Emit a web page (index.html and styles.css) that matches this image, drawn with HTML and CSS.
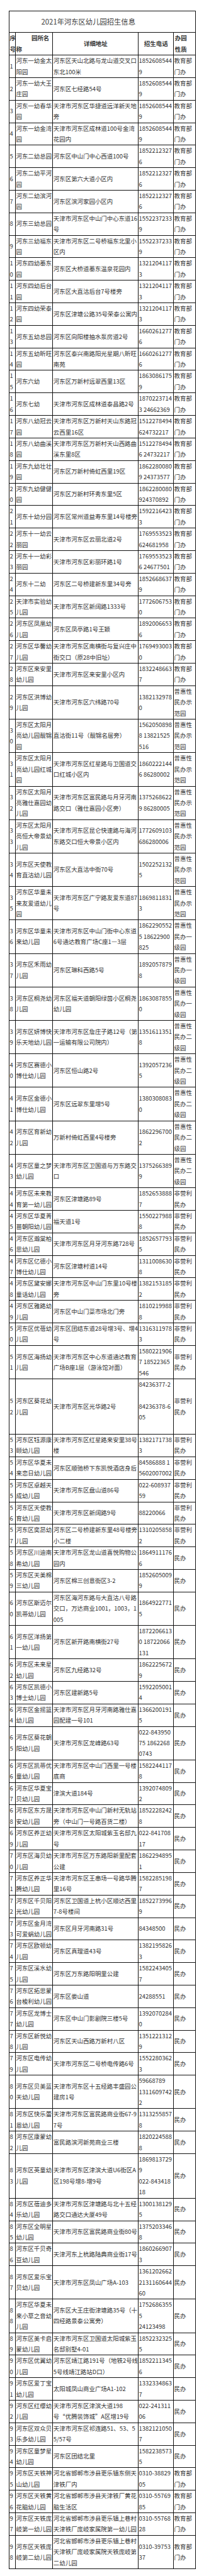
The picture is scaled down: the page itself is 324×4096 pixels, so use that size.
FILE: index.html
```html
<!DOCTYPE html>
<html lang="zh-CN">
<head>
<meta charset="utf-8">
<title>2021年河东区幼儿园招生信息</title>
<link rel="stylesheet" href="styles.css">
</head>
<body>
<div class="page">
<table class="enroll">
<colgroup>
<col class="col-no"><col class="col-name"><col class="col-addr"><col class="col-tel"><col class="col-type">
</colgroup>
<tbody>
<tr class="title-row"><td colspan="5" class="title">2021年河东区幼儿园招生信息</td></tr>
<tr class="head">
<th class="h-left">序<br>号</th>
<th class="h-name">园所名<br>称</th>
<th class="h-center">详细地址</th>
<th class="h-center">招生电话</th>
<th class="h-left h-type">办园<br>性质</th>
</tr>
<tr><td>1</td><td>河东一幼金太<br>阳园</td><td>河东区天山北路与龙山道交叉口<br>东北100米</td><td>1852608544<br>9</td><td>教育部<br>门办</td></tr>
<tr><td>2</td><td>河东一幼大王<br>庄园</td><td>河东区七经路54号</td><td>1852608544<br>9</td><td>教育部<br>门办</td></tr>
<tr><td>3</td><td>河东一幼春华<br>园</td><td>天津市河东区华捷道远洋新天地<br>旁</td><td>1852608544<br>9</td><td>教育部<br>门办</td></tr>
<tr><td>4</td><td>河东一幼金湾<br>园</td><td>天津市河东区成林道100号金湾<br>花园内</td><td>1852608544<br>9</td><td>教育部<br>门办</td></tr>
<tr><td>5</td><td>河东二幼总园</td><td>河东区中山门中心西道100号</td><td>1852212327<br>6</td><td>教育部<br>门办</td></tr>
<tr><td>6</td><td>河东二幼平河<br>园</td><td>河东区第六大道小区内</td><td>1852212327<br>6</td><td>教育部<br>门办</td></tr>
<tr><td>7</td><td>河东二幼滨河<br>园</td><td>河东区滨河家园小区内</td><td>1852212327<br>6</td><td>教育部<br>门办</td></tr>
<tr><td>8</td><td>河东三幼总园</td><td>天津市河东区中山门中心东道16<br>号</td><td>1552237233<br>9</td><td>教育部<br>门办</td></tr>
<tr><td>9</td><td>河东三幼福东<br>园</td><td>天津市河东区二号桥福东北里小<br>区内</td><td>1552237233<br>9</td><td>教育部<br>门办</td></tr>
<tr><td>1<br>0</td><td>河东四幼蓁东<br>园</td><td>河东区大桥道蓁东温泉花园内</td><td>1321204117<br>3</td><td>教育部<br>门办</td></tr>
<tr><td>1<br>1</td><td>河东四幼后台<br>园</td><td>河东区大直沽后台7号楼旁</td><td>1321204117<br>3</td><td>教育部<br>门办</td></tr>
<tr><td>1<br>2</td><td>河东四幼荣泰<br>园</td><td>河东区津塘公路35号荣泰公寓内</td><td>1321204117<br>3</td><td>教育部<br>门办</td></tr>
<tr><td>1<br>3</td><td>河东五幼总园</td><td>河东区向阳楼抽水泵房道2号</td><td>1660261277<br>6</td><td>教育部<br>门办</td></tr>
<tr><td>1<br>4</td><td>河东五幼昕旺<br>园</td><td>河东区泰兴南路阳光星期八昕旺<br>南苑</td><td>1660261277<br>6</td><td>教育部<br>门办</td></tr>
<tr><td>1<br>5</td><td>河东六幼</td><td>河东区万新村远翠西里13区</td><td>1863086175<br>9</td><td>教育部<br>门办</td></tr>
<tr><td>1<br>6</td><td>河东七幼</td><td>天津市河东区成林道泰昌路2号</td><td>1870223714<br>3 24662369</td><td>教育部<br>门办</td></tr>
<tr><td>1<br>7</td><td>河东八幼冠云<br>园</td><td>天津市河东区万新村天山东路冠<br>云西里16区</td><td>1512278494<br>624732217</td><td>教育部<br>门办</td></tr>
<tr><td>1<br>8</td><td>河东八幼曲溪<br>园</td><td>天津市河东区万新村天山西路曲<br>溪东里8区</td><td>1512278494<br>6 24732217</td><td>教育部<br>门办</td></tr>
<tr><td>1<br>9</td><td>河东九幼壮壮<br>园</td><td>河东区万新村倚虹西里19区</td><td>1862280080<br>9 24373577</td><td>教育部<br>门办</td></tr>
<tr><td>2<br>0</td><td>河东九幼健健<br>园</td><td>河东区万新村环秀东里5区</td><td>1862280080<br>924370892</td><td>教育部<br>门办</td></tr>
<tr><td>2<br>1</td><td>河东十幼分园</td><td>河东区常州道益寿东里14号楼旁</td><td>1592216423<br>3</td><td>教育部<br>门办</td></tr>
<tr><td>2<br>2</td><td>河东十一幼云<br>丽园</td><td>天津市河东区云丽北道2号</td><td>1769553523<br>624681958</td><td>教育部<br>门办</td></tr>
<tr><td>2<br>3</td><td>河东十一幼彩<br>丽园</td><td>天津市河东区彩丽环路1号</td><td>1769553523<br>6 24677501</td><td>教育部<br>门办</td></tr>
<tr><td>2<br>4</td><td>河东十二幼</td><td>河东区二号桥建新东里34号旁</td><td>1852668637<br>9</td><td>教育部<br>门办</td></tr>
<tr><td>2<br>5</td><td>天津市实验幼<br>儿园</td><td>天津市河东区新阔路1333号</td><td>1772606753<br>0</td><td>教育部<br>门办</td></tr>
<tr><td>2<br>6</td><td>河东区凤凰幼<br>儿园</td><td>河东区凤亭路1号王颖</td><td>1892006653<br>6</td><td>教育部<br>门办</td></tr>
<tr><td>2<br>7</td><td>河东区华馨幼<br>儿园</td><td>天津市河东区南横街与复兴庄中<br>街交口（原28中旧址）</td><td>1769493003<br>0</td><td>教育部<br>门办</td></tr>
<tr><td>2<br>8</td><td>河东区来安里<br>幼儿园</td><td>天津市河东区来安里小区内</td><td>1832248663<br>7</td><td>教育部<br>门办</td></tr>
<tr><td>2<br>9</td><td>河东区洪博幼<br>儿园</td><td>天津市河东区六纬路70号</td><td>1382132978<br>0</td><td>普惠性<br>民办示<br>范园</td></tr>
<tr><td>3<br>0</td><td>河东区太阳月<br>亮幼儿园靓锦<br>园</td><td>直沽街11号（靓锦名居旁）</td><td>1562050898<br>8 13821525<br>516</td><td>普惠性<br>民办示<br>范园</td></tr>
<tr><td>3<br>1</td><td>河东区太阳月<br>亮幼儿园红城<br>园</td><td>天津市河东区红星路与卫国道交<br>口红城小区内</td><td>1860222144<br>6 86280002</td><td>普惠性<br>民办示<br>范园</td></tr>
<tr><td>3<br>2</td><td>河东区太阳月<br>亮雅仕嘉园幼<br>儿园</td><td>天津市河东区富民路与月牙河南<br>路交口（雅仕嘉园小区旁）</td><td>1375268622<br>9 86280005</td><td>普惠性<br>民办示<br>范园</td></tr>
<tr><td>3<br>3</td><td>河东区太阳月<br>亮恒大帝景幼<br>儿园</td><td>天津市河东区昆仑快速路与海河<br>东路交口恒大帝景小区内</td><td>1772609103<br>686280006</td><td>普惠性<br>民办示<br>范园</td></tr>
<tr><td>3<br>4</td><td>河东区天使教<br>育直沽幼儿园</td><td>河东区大直沽中街70号</td><td>1502252132<br>5</td><td>普惠性<br>民办示<br>范园</td></tr>
<tr><td>3<br>5</td><td>河东区华童未<br>来友爱道幼儿<br>园</td><td>天津市河东区广宁路友爱东道87<br>号</td><td>1869811831<br>3</td><td>普惠性<br>民办示<br>范园</td></tr>
<tr><td>3<br>6</td><td>河东区华童未<br>来幼儿园</td><td>天津市河东区中山门街中心东道<br>6号通达教育广场C座1—3层</td><td>1862290552<br>5 18622900<br>825</td><td>普惠性<br>民办一<br>级园</td></tr>
<tr><td>3<br>7</td><td>河东区禾雨幼<br>儿园</td><td>河东区琳科西路5号</td><td>1892057879<br>8</td><td>普惠性<br>民办一<br>级园</td></tr>
<tr><td>3<br>8</td><td>河东区桐尧幼<br>儿园</td><td>河东区福天道朝阳绿茵小区桐尧<br>幼儿园</td><td>1863087855<br>0</td><td>普惠性<br>民办一<br>级园</td></tr>
<tr><td>3<br>9</td><td>河东区妍博快<br>乐天地幼儿园</td><td>天津市河东区詹庄子路12号（第<br>一运输有限公司院内）</td><td>1351611351<br>8</td><td>普惠性<br>民办二<br>级园</td></tr>
<tr><td>4<br>0</td><td>河东区赛德小<br>博仕幼儿园</td><td>河东区恒山路2号</td><td>1392057236<br>5</td><td>普惠性<br>民办二<br>级园</td></tr>
<tr><td>4<br>1</td><td>河东区金德小<br>博仕幼儿园</td><td>河东区远翠东里增5号</td><td>1380308083<br>0</td><td>普惠性<br>民办二<br>级园</td></tr>
<tr><td>4<br>2</td><td>河东区育新幼<br>儿园</td><td>万新村倚虹西里4号楼旁</td><td>1862296700<br>2</td><td>普惠性<br>民办二<br>级园</td></tr>
<tr><td>4<br>3</td><td>河东区童之梦<br>幼儿园</td><td>天津市河东区卫国道与万东路交<br>口</td><td>1375266389<br>9</td><td>普惠性<br>民办二<br>级园</td></tr>
<tr><td>4<br>4</td><td>河东区未来教<br>育第一幼儿园</td><td>河东区津塘路89号</td><td>1852653888<br>7</td><td>非营利<br>民办</td></tr>
<tr><td>4<br>5</td><td>河东区华夏菁<br>苗朝阳幼儿园</td><td>福天道1号</td><td>1550227988<br>8</td><td>非营利<br>民办</td></tr>
<tr><td>4<br>6</td><td>河东区瀚棠柏<br>思幼儿园</td><td>天津市河东区月牙河东路728号</td><td>1852657793<br>5</td><td>非营利<br>民办</td></tr>
<tr><td>4<br>7</td><td>河东区亿德小<br>博仕幼儿园</td><td>河东区津塘村道14号</td><td>1311008630<br>8</td><td>非营利<br>民办</td></tr>
<tr><td>4<br>8</td><td>河东区黛安娜<br>童话幼儿园</td><td>天津市河东区中山门东里10号楼<br>旁</td><td>1382153185<br>2</td><td>非营利<br>民办</td></tr>
<tr><td>4<br>9</td><td>河东区雅路幼<br>儿园</td><td>河东区中山门菜市场北门旁</td><td>1810219988<br>8</td><td>非营利<br>民办</td></tr>
<tr><td>5<br>0</td><td>河东区优蓓幼<br>儿园</td><td>河东区团结东道28号增3号、增4<br>号</td><td>1316311978<br>3</td><td>非营利<br>民办</td></tr>
<tr><td>5<br>1</td><td>河东区海扬幼<br>儿园</td><td>天津市河东区中心东道通达教育<br>广场B座1层（游泳馆对面）</td><td>1580221906<br>7 18522365<br>546</td><td>非营利<br>民办</td></tr>
<tr><td>5<br>2</td><td>河东区葵花幼<br>儿园</td><td>天津市河东区光华路2号</td><td>84236377-2<br>&nbsp;<br>84236378-6<br>05<br>&nbsp;</td><td>非营利<br>民办</td></tr>
<tr><td>5<br>3</td><td>河东区钰源康<br>颐幼儿园</td><td>天津市河东区红星路来安里38号<br>楼</td><td>1382171738<br>3</td><td>非营利<br>民办</td></tr>
<tr><td>5<br>4</td><td>河东区华夏未<br>来恋日幼儿园</td><td>河东区顺驰桥下东凯悦酒店身后</td><td>84586888 1<br>5602007002</td><td>非营利<br>民办</td></tr>
<tr><td>5<br>5</td><td>河东区卓越天<br>成幼儿园</td><td>天津市河东区盘山道86号</td><td>022-608937<br>59</td><td>非营利<br>民办</td></tr>
<tr><td>5<br>6</td><td>河东区天使教<br>育幼儿园</td><td>天津市河东区新阔路9号</td><td>88220066</td><td>非营利<br>民办</td></tr>
<tr><td>5<br>7</td><td>河东区奕昂幼<br>儿园</td><td>河东区二号桥建新东里48号楼旁<br>小二楼</td><td>1310205858<br>2</td><td>非营利<br>民办</td></tr>
<tr><td>5<br>8</td><td>河东区川迪南<br>希幼儿园</td><td>天津市河东区龙山道喜悦购物公<br>园内</td><td>1864911176<br>6</td><td>民办</td></tr>
<tr><td>5<br>9</td><td>河东区天美棉<br>三幼儿园</td><td>河东区棉三创意街区3-2</td><td>1852605009<br>9</td><td>民办</td></tr>
<tr><td>6<br>0</td><td>河东区斯迈尔<br>凯蒂幼儿园</td><td>河东区海河东路与大直沽八号路<br>交口，万达商业1001，1003，1<br>005</td><td>1864922771<br>5</td><td>民办</td></tr>
<tr><td>6<br>1</td><td>河东区洋扬第<br>一幼儿园</td><td>河东区新开路南横街27号</td><td>1872206613<br>0 18722066<br>131</td><td>民办</td></tr>
<tr><td>6<br>2</td><td>河东区未来星<br>幼儿园</td><td>河东区九经路32号</td><td>1862225672<br>9</td><td>民办</td></tr>
<tr><td>6<br>3</td><td>河东区凯德小<br>博士幼儿园</td><td>河东区建新路5号</td><td>1592205001<br>4</td><td>民办</td></tr>
<tr><td>6<br>4</td><td>河东区金摇篮<br>幼儿园</td><td>天津市河东区月牙河南路雅仕嘉<br>园配建一号101</td><td>1366200191<br>5</td><td>民办</td></tr>
<tr><td>6<br>5</td><td>河东区葵花朝<br>阳幼儿园</td><td>天津市河东区龙峰路63号</td><td>022-843950<br>75 1862268<br>0743</td><td>民办</td></tr>
<tr><td>6<br>6</td><td>河东区凯蒂优<br>童幼儿园</td><td>天津市河东区中山门西里一号楼<br>底商</td><td>1582244117<br>8</td><td>民办</td></tr>
<tr><td>6<br>7</td><td>河东区华夏宝<br>贝幼儿园</td><td>津滨大道184号</td><td>1392074809<br>2</td><td>民办</td></tr>
<tr><td>6<br>8</td><td>河东区东方晟<br>安幼儿园</td><td>天津市河东区中山门新村无轨站<br>旁（中山门一号路百货二楼）</td><td>1852228242<br>8</td><td>民办</td></tr>
<tr><td>6<br>9</td><td>河东区养正幼<br>儿园</td><td>天津市河东区太阳城紫玉名邸九<br>号</td><td>022-841708<br>17</td><td>民办</td></tr>
<tr><td>7<br>0</td><td>河东区海贝幼<br>儿园</td><td>天津市河东区万东路阳新里配套<br>公建</td><td>1862294895<br>1</td><td>民办</td></tr>
<tr><td>7<br>1</td><td>河东区养正华<br>腾幼儿园</td><td>天津市河东区王串场一号路华腾<br>里16号</td><td>1582285198<br>7</td><td>民办</td></tr>
<tr><td>7<br>2</td><td>河东区千贝阳<br>光幼儿园</td><td>河东区卫国道上杭小区顺达西里<br>7-8号楼间</td><td>1852273996<br>9</td><td>民办</td></tr>
<tr><td>7<br>3</td><td>河东区金月湾<br>可爱蜗幼儿园</td><td>河东区月牙河南路31号</td><td>84348500</td><td>民办</td></tr>
<tr><td>7<br>4</td><td>河东区欧顿幼<br>儿园</td><td>河东区真理道43号</td><td>1382195826<br>3</td><td>民办</td></tr>
<tr><td>7<br>5</td><td>河东区溪水幼<br>儿园</td><td>河东区万东路阳明里公建</td><td>1582243405<br>7</td><td>民办</td></tr>
<tr><td>7<br>6</td><td>河东区拓思蒙<br>台梭利幼儿园</td><td>河东区娄山道</td><td>24288551</td><td>民办</td></tr>
<tr><td>7<br>7</td><td>河东区龙博士<br>幼儿园</td><td>河东区中山门影剧院三楼5号</td><td>1392070284<br>0</td><td>民办</td></tr>
<tr><td>7<br>8</td><td>河东区新悦幼<br>儿园</td><td>河东区天山西路万新村八区</td><td>1351221312<br>9</td><td>民办</td></tr>
<tr><td>7<br>9</td><td>河东区电传幼<br>儿园</td><td>天津市河东区二号桥电传路6号</td><td>1552280362<br>3</td><td>民办</td></tr>
<tr><td>8<br>0</td><td>河东区贝美蓝<br>天幼儿园</td><td>天津市河东区十五经路丰盛园公<br>建房1号</td><td>59668789<br>1311609742<br>2</td><td>民办</td></tr>
<tr><td>8<br>1</td><td>河东区快乐蕾<br>恩幼儿园</td><td>天津市河东区富民路商业街67-9<br>7号</td><td>1313255857<br>8</td><td>民办</td></tr>
<tr><td>8<br>2</td><td>河东区康蒙幼<br>儿园</td><td>富民路滨河新苑商业三楼</td><td>1820224588<br>8</td><td>民办</td></tr>
<tr><td>8<br>3</td><td>河东区英童幼<br>儿园</td><td>天津市河东区津滨大道U6街区A<br>区198号增8-增9号</td><td>1869813729<br>9<br>022-843418<br>18</td><td>民办</td></tr>
<tr><td>8<br>4</td><td>河东区蓓迪多<br>乐幼儿园</td><td>天津市河东区津塘路与北十五经<br>路交口通达大厦49号</td><td>1300138129<br>5</td><td>民办</td></tr>
<tr><td>8<br>5</td><td>河东区全明星<br>幼儿园</td><td>天津市河东区富民路商业街80号</td><td>1375203346<br>8</td><td>民办</td></tr>
<tr><td>8<br>6</td><td>河东区千贝奇<br>豆幼儿园</td><td>天津河东上杭路陆典商业街17号</td><td>1860266907<br>3</td><td>民办</td></tr>
<tr><td>8<br>7</td><td>河东区爱乐宝<br>贝幼儿园</td><td>天津市河东区凤山广场A-103</td><td>1361202662<br>2131160644<br>60</td><td>民办</td></tr>
<tr><td>8<br>8</td><td>河东区华夏未<br>来小草之音幼<br>儿园</td><td>河东区大王庄街津塘路35号（十<br>四经路景泰公寓旁）</td><td>1752686355<br>5<br>24123498</td><td>民办</td></tr>
<tr><td>8<br>9</td><td>河东区美卡启<br>蒙幼儿园</td><td>天津市河东区卫国道太阳城紫玉<br>名邸别墅4-01</td><td>1852232325<br>5</td><td>民办</td></tr>
<tr><td>9<br>0</td><td>河东区优翼幼<br>儿园</td><td>河东区靖江路191号（地铁2号线<br>5号线靖江路站D口）</td><td>1852211345<br>6</td><td>民办</td></tr>
<tr><td>9<br>1</td><td>河东区爱丁宝<br>幼儿园</td><td>太阳城凤山商业广场A1-102</td><td>1332334863<br>7</td><td>民办</td></tr>
<tr><td>9<br>2</td><td>河东区红缨幼<br>儿园</td><td>天津市河东区津滨大道198<br>号“优腾装饰城”A区增19号</td><td>022-241311<br>06</td><td>民办</td></tr>
<tr><td>9<br>3</td><td>河东区双众贝<br>乐多幼儿园</td><td>天津市河东区祁连路51、53、5<br>5/57号</td><td>1382121050<br>7</td><td>民办</td></tr>
<tr><td>9<br>4</td><td>河东区童梦星<br>幼儿园</td><td>河东区团结北里</td><td>1582238573<br>5</td><td>民办</td></tr>
<tr><td>9<br>5</td><td>河东区天铁神<br>山幼儿园</td><td>河北省邯郸市涉县更乐镇东侧天<br>津铁厂内</td><td>0310-38829<br>05</td><td>教育部<br>门办</td></tr>
<tr><td>9<br>6</td><td>河东区天铁黄<br>花脑幼儿园</td><td>河北省邯郸市涉县天津铁厂黄花<br>脑生活区</td><td>0310-55769<br>85</td><td>教育部<br>门办</td></tr>
<tr><td>9<br>7</td><td>河东区天铁庞<br>岐第一幼儿园</td><td>河北省邯郸市涉县更乐镇上巷村<br>天津铁厂庞岐家属院第一幼儿园</td><td>0310-55768<br>28</td><td>教育部<br>门办</td></tr>
<tr><td>9<br>8</td><td>河东区天铁庞<br>岐第二幼儿园</td><td>河北省邯郸市涉县更乐镇上巷村<br>天津铁厂庞岐家属院天铁庞岐第<br>二幼儿园</td><td>0310-39753<br>37</td><td>教育部<br>门办</td></tr>
</tbody>
</table>
</div>
</body>
</html>
```

FILE: styles.css
```css
html, body {
  margin: 0;
  padding: 0;
  background: #ffffff;
}

.page {
  padding: 16.9px 0 0 13.7px;
}

.enroll {
  border-collapse: collapse;
  table-layout: fixed;
  width: 296.3px;
  font-family: "Noto Sans CJK SC", "Noto Sans", sans-serif;
  font-size: 9.45px;
  line-height: 17.4px;
  color: #333333;
}

.col-no { width: 10.1px; }
.col-name { width: 59.4px; }
.col-addr { width: 135.7px; }
.col-tel { width: 56px; }
.col-type { width: 35.1px; }

.enroll td,
.enroll th {
  border: 1px solid #111111;
  padding: 0 0 0 0.7px;
  vertical-align: middle;
  text-align: left;
  white-space: nowrap;
  overflow: hidden;
}

.enroll .title {
  height: 33.4px;
  padding-left: 50.9px;
  font-size: 11.3px;
  line-height: 15px;
  color: #3a3a3a;
}

.enroll th {
  font-weight: 700;
  color: #333333;
}

.enroll .h-left {
  text-align: left;
}

.enroll .h-name {
  text-align: left;
  text-indent: 24.5px;
}

.enroll .h-center {
  text-align: center;
}

.enroll .h-type {
  padding-left: 2px;
}
```
